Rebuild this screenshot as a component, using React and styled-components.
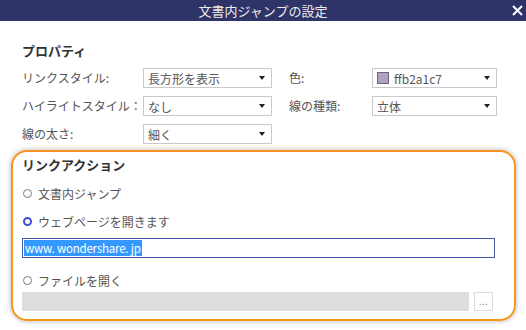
import React from 'react';
import styled, { createGlobalStyle } from 'styled-components';

const GlobalStyle = createGlobalStyle`
  html, body {
    margin: 0;
    padding: 0;
    background: #ffffff;
  }
  body {
    font-family: "Noto Sans CJK JP", "Noto Sans", sans-serif;
    font-size: 12px;
    color: #555555;
  }
`;

const Dialog = styled.div`
  width: 526px;
  height: 330px;
  background: #ffffff;
  overflow: hidden;
`;

const TitleBar = styled.div`
  position: relative;
  height: 21px;
  background: #2e3468;
  color: #ececec;
  font-size: 13px;
  line-height: 21px;
  text-align: center;
`;

const CloseButton = styled.span`
  position: absolute;
  right: 3px;
  top: 0;
  width: 12px;
  height: 21px;
  display: flex;
  align-items: center;
  justify-content: center;
`;

const Section = styled.div`
  padding: 21px 0 0 22px;
`;

const Heading = styled.div`
  font-size: 13px;
  font-weight: bold;
  color: #333333;
  line-height: 18px;
`;

const PropGrid = styled.div`
  display: grid;
  grid-template-columns: 121px 129px 100px 125px;
  row-gap: 8px;
  margin-top: 8px;
  align-items: center;
`;

const Label = styled.div`
  line-height: 20px;
  white-space: nowrap;
  padding-left: ${(p) => (p.$indent ? 17 : 0)}px;
`;

const Select = styled.div`
  box-sizing: border-box;
  height: 20px;
  border: 1px solid #c9c9c9;
  background: #fff;
  display: flex;
  align-items: center;
  padding: 0 6px 0 4px;
  color: #555;
  white-space: nowrap;
`;

const SelectText = styled.span`
  flex: 1;
  display: flex;
  align-items: center;
  gap: 5px;
`;

const Arrow = styled.span`
  width: 0;
  height: 0;
  border-left: 3px solid transparent;
  border-right: 3px solid transparent;
  border-top: 4px solid #222;
`;

const Swatch = styled.span`
  width: 10px;
  height: 10px;
  background: #b2a1c7;
  border: 1px solid #6a6a6a;
`;

const ActionBox = styled.div`
  box-sizing: border-box;
  margin: 6px 0 0 11px;
  width: 505px;
  height: 171px;
  border: 2px solid #f7941d;
  border-radius: 16px;
  box-shadow: 0 0 4px 1px rgba(0, 0, 0, 0.22);
  padding: 4px 0 0 9px;
`;

const RadioRow = styled.label`
  display: flex;
  align-items: center;
  gap: 6px;
  height: 18px;
  margin-top: ${(p) => p.$gap}px;
  padding-left: 1px;
`;

const Radio = styled.span`
  box-sizing: border-box;
  width: 9px;
  height: 9px;
  border-radius: 50%;
  border: ${(p) => (p.$checked ? '2.5px solid #3a4fd6' : '1px solid #7a7a7a')};
  background: #fff;
`;

const UrlInput = styled.div`
  box-sizing: border-box;
  margin-top: 8px;
  width: 473px;
  height: 20px;
  border: 1px solid #4a58a8;
  padding: 1px 1px;
  display: flex;
  align-items: center;
`;

const Selected = styled.span`
  background: #3399ff;
  color: #ffffff;
  font-size: 11.5px;
  letter-spacing: -0.2px;
  line-height: 16px;
  padding: 0 1px;
`;

const FileRow = styled.div`
  display: flex;
  gap: 5px;
  margin-top: 3px;
  width: 471px;
`;

const FilePath = styled.div`
  flex: 1;
  height: 19px;
  background: #dedede;
`;

const BrowseButton = styled.div`
  box-sizing: border-box;
  width: 19px;
  height: 19px;
  border: 1px solid #dcdcdc;
  background: #fff;
  color: #8a8a8a;
  font-size: 9px;
  display: flex;
  align-items: center;
  justify-content: center;
  letter-spacing: 0.5px;
`;

const props = [
  ['リンクスタイル:', '長方形を表示', '色:', 'color'],
  ['ハイライトスタイル：', 'なし', '線の種類:', '立体'],
  ['線の太さ:', '細く', null, null],
];

export default function App() {
  return (
    <Dialog>
      <GlobalStyle />
      <TitleBar>
        文書内ジャンプの設定
        <CloseButton>
          <svg width="11" height="11" viewBox="0 0 11 11">
            <path d="M1 1 L10 10 M10 1 L1 10" stroke="#ffffff" strokeWidth="2" />
          </svg>
        </CloseButton>
      </TitleBar>
      <Section>
        <Heading>プロパティ</Heading>
        <PropGrid>
          {props.map(([l1, v1, l2, v2]) => (
            <React.Fragment key={l1}>
              <Label>{l1}</Label>
              <Select>
                <SelectText>{v1}</SelectText>
                <Arrow />
              </Select>
              {l2 ? <Label $indent>{l2}</Label> : <span />}
              {v2 ? (
                <Select>
                  <SelectText>
                    {v2 === 'color' ? (
                      <>
                        <Swatch />
                        ffb2a1c7
                      </>
                    ) : (
                      v2
                    )}
                  </SelectText>
                  <Arrow />
                </Select>
              ) : (
                <span />
              )}
            </React.Fragment>
          ))}
        </PropGrid>
      </Section>
      <ActionBox>
        <Heading>リンクアクション</Heading>
        <RadioRow $gap={10}>
          <Radio />
          文書内ジャンプ
        </RadioRow>
        <RadioRow $gap={10}>
          <Radio $checked />
          ウェブページを開きます
        </RadioRow>
        <UrlInput>
          <Selected>www. wondershare. jp</Selected>
        </UrlInput>
        <RadioRow $gap={13}>
          <Radio />
          ファイルを開く
        </RadioRow>
        <FileRow>
          <FilePath />
          <BrowseButton>...</BrowseButton>
        </FileRow>
      </ActionBox>
    </Dialog>
  );
}
